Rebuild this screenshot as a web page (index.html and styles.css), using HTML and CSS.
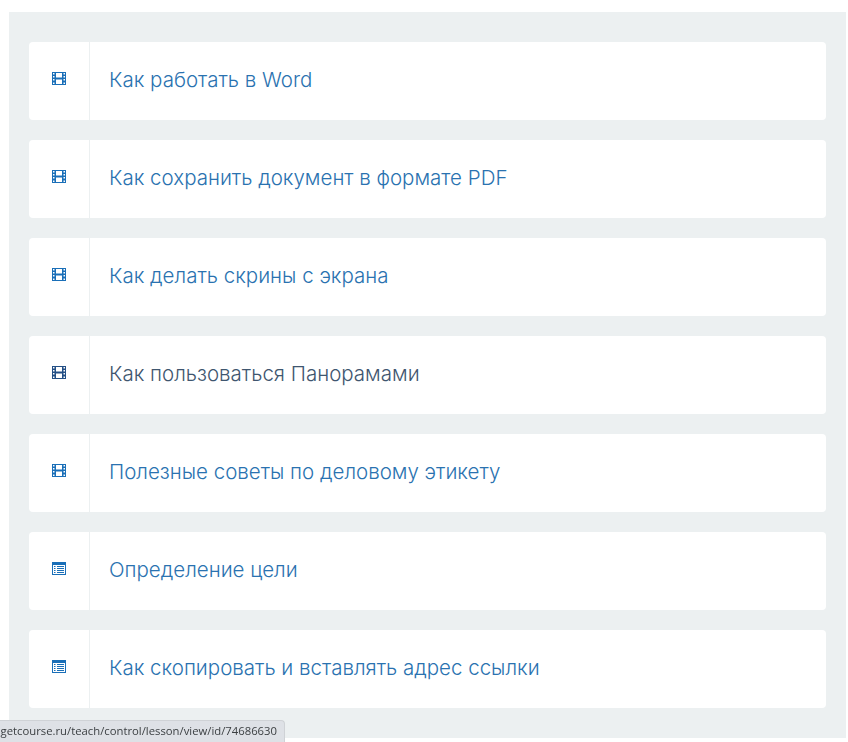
FILE: index.html
```html
<!DOCTYPE html>
<html lang="ru">
<head>
<meta charset="utf-8">
<title>Уроки</title>
<link rel="stylesheet" href="styles.css">
</head>
<body>
<main class="panel">
  <a class="card" href="#">
    <span class="card-icon"><svg class="icon" viewBox="0 0 14 13"><use href="#film"/></svg></span>
    <span class="card-title">Как работать в Word</span>
  </a>
  <a class="card" href="#">
    <span class="card-icon"><svg class="icon" viewBox="0 0 14 13"><use href="#film"/></svg></span>
    <span class="card-title">Как сохранить документ в формате PDF</span>
  </a>
  <a class="card" href="#">
    <span class="card-icon"><svg class="icon" viewBox="0 0 14 13"><use href="#film"/></svg></span>
    <span class="card-title">Как делать скрины с экрана</span>
  </a>
  <a class="card card-hover" href="#">
    <span class="card-icon"><svg class="icon" viewBox="0 0 14 13"><use href="#film"/></svg></span>
    <span class="card-title">Как пользоваться Панорамами</span>
  </a>
  <a class="card" href="#">
    <span class="card-icon"><svg class="icon" viewBox="0 0 14 13"><use href="#film"/></svg></span>
    <span class="card-title">Полезные советы по деловому этикету</span>
  </a>
  <a class="card" href="#">
    <span class="card-icon"><svg class="icon" viewBox="0 0 14 13"><use href="#list"/></svg></span>
    <span class="card-title">Определение цели</span>
  </a>
  <a class="card" href="#">
    <span class="card-icon"><svg class="icon" viewBox="0 0 14 13"><use href="#list"/></svg></span>
    <span class="card-title">Как скопировать и вставлять адрес ссылки</span>
  </a>
</main>
<div class="status">getcourse.ru/teach/control/lesson/view/id/74686630</div>
<svg class="defs" width="0" height="0" aria-hidden="true">
  <defs>
    <symbol id="film" viewBox="0 0 14 13">
      <path fill="currentColor" fill-rule="evenodd" d="M0 0H14V13H0ZM1 1V2.500H2.500V1ZM11.500 1V2.500H13V1ZM4 1V5.500H10V1ZM1 4V5.500H2.500V4ZM11.500 4V5.500H13V4ZM1 7V8.500H2.500V7ZM11.500 7V8.500H13V7ZM4 7.500V12H10V7.500ZM1 10.500V12H2.500V10.500ZM11.500 10.500V12H13V10.500Z"/>
    </symbol>
    <symbol id="list" viewBox="0 0 14 13">
      <path fill="currentColor" fill-rule="evenodd" d="M0 0H14V13H0ZM1 3V12H13V3Z"/>
      <path fill="currentColor" d="M2 4H3.500V5H2ZM5 4H12V5H5ZM2 6H3.500V7H2ZM5 6H12V7H5ZM2 8H3.500V9H2ZM5 8H12V9H5ZM2 10H3.500V11H2ZM5 10H12V11H5Z"/>
    </symbol>
  </defs>
</svg>
</body>
</html>
```
FILE: styles.css
```css
html, body {
  margin: 0;
  padding: 0;
  background: #fff;
}

body {
  padding: 12px 2px 4px 9px;
  height: 742px;
  box-sizing: border-box;
  overflow: hidden;
  font-family: Inter, Lato, sans-serif;
}

.panel {
  display: flex;
  flex-direction: column;
  gap: 20px;
  padding: 30px 20px;
  background: #ecf0f1;
}

.card {
  display: flex;
  align-items: stretch;
  height: 78px;
  background: #fff;
  border-radius: 4px;
  color: #2a72b0;
  text-decoration: none;
}

.card-hover {
  color: #3f566f;
}

.card-icon {
  display: flex;
  justify-content: center;
  flex: 0 0 61px;
  box-sizing: border-box;
  padding: 30px 0 0;
  border-right: 1px solid #ecf0f1;
  color: #1a6fb8;
}

.card-hover .card-icon {
  color: #234f85;
}

.icon {
  display: block;
  width: 14px;
  height: 13px;
}

.card-title {
  padding: 24px 0 0 19px;
  font-size: 20.5px;
  font-weight: 350;
  line-height: 28px;
}

.status {
  position: fixed;
  left: 0;
  bottom: 0;
  display: flex;
  justify-content: flex-end;
  width: 285px;
  height: 22px;
  box-sizing: border-box;
  padding: 0 7px 0 0;
  overflow: hidden;
  white-space: nowrap;
  background: #dee1e6;
  border: 1px solid #cfd2d6;
  border-width: 1px 1px 0 0;
  border-top-right-radius: 4px;
  color: #3c4043;
  font-family: "Open Sans", sans-serif;
  font-size: 11.3px;
  line-height: 20px;
}

.defs {
  position: absolute;
}
```
